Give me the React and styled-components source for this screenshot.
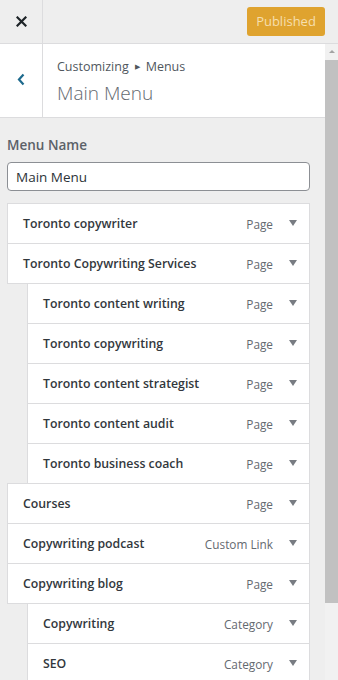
import React from 'react';
import styled, {createGlobalStyle} from 'styled-components';

const Global = createGlobalStyle`
  html, body {
    margin: 0;
    padding: 0;
    background: #eeeeee;
  }
  * { box-sizing: border-box; }
`

const Frame = styled.div`
  width: 338px;
  height: 680px;
  overflow: hidden;
  background: #eeeeee;
  font-family: "Open Sans", "Noto Sans", sans-serif;
  display: flex;
  flex-direction: column;
`

const TopBar = styled.div`
  height: 44px;
  flex-shrink: 0;
  display: flex;
  align-items: center;
  justify-content: space-between;
  background: #eeeeee;
  border-bottom: 1px solid #dcdcde;
`

const CloseBtn = styled.div`
  width: 43px;
  height: 100%;
  border-right: 1px solid #dcdcde;
  display: flex;
  align-items: center;
  justify-content: center;
`

const PublishBtn = styled.div`
  width: 78px;
  height: 29px;
  margin-right: 13px;
  margin-top: -1px;
  border-radius: 3px;
  background: #dfa32f;
  color: #f6dfae;
  font-size: 13px;
  display: flex;
  align-items: center;
  justify-content: center;
`

const Body = styled.div`
  flex: 1;
  display: flex;
  min-height: 0;
`

const Content = styled.div`
  width: 325px;
  display: flex;
  flex-direction: column;
  overflow: hidden;
`

const SectionHead = styled.div`
  height: 74px;
  flex-shrink: 0;
  background: #fff;
  border-bottom: 1px solid #dcdcde;
  display: flex;
`

const BackBtn = styled.div`
  width: 43px;
  border-right: 1px solid #dcdcde;
  display: flex;
  align-items: center;
  justify-content: center;
  padding-bottom: 2px;
`

const HeadText = styled.div`
  padding: 14px 0 0 14px;
`

const Crumb = styled.div`
  font-size: 12.5px;
  color: #50575e;
  line-height: 18px;
  display: flex;
  align-items: center;
  gap: 6px;
`

const CrumbArrow = styled.span`
  font-size: 7px;
  color: #50575e;
`

const Title = styled.div`
  font-size: 19px;
  font-weight: 300;
  color: #646970;
  line-height: 26px;
  margin-top: 4px;
`

const Panel = styled.div`
  flex-shrink: 0;
  padding: 17px 15px 0 7px;
`

const Label = styled.div`
  font-size: 13.5px;
  font-weight: 600;
  color: #5b6168;
  line-height: 20px;
`

const NameInput = styled.div`
  margin-top: 7px;
  height: 29px;
  border: 1px solid #8c8f94;
  border-radius: 4px;
  background: #fff;
  font-size: 13.5px;
  color: #2c3338;
  padding-left: 8px;
  display: flex;
  align-items: center;
`

const List = styled.div`
  margin-top: 12px;
`

const Item = styled.div`
  height: 41px;
  margin-top: -1px;
  margin-left: ${p => p.$depth * 20}px;
  background: #fff;
  border: 1px solid #dcdcde;
  display: flex;
  align-items: center;
  padding: 0 12px 0 15px;
  &:first-child { margin-top: 0; }
`

const ItemTitle = styled.div`
  flex: 1;
  font-size: 12.3px;
  font-weight: 600;
  color: #32373c;
`

const ItemType = styled.div`
  font-size: 11.8px;
  color: #646970;
  margin-right: 16px;
`

const Caret = styled.div`
  width: 0;
  height: 0;
  border-left: 4.5px solid transparent;
  border-right: 4.5px solid transparent;
  border-top: 6px solid #787c82;
  margin-top: -2px;
`

const Scrollbar = styled.div`
  width: 13px;
  flex-shrink: 0;
  background: #f1f1f1;
`

const ScrollUp = styled.div`
  width: 0;
  height: 0;
  margin: 6px auto 0;
  border-left: 3px solid transparent;
  border-right: 3px solid transparent;
  border-bottom: 3px solid #a3a3a3;
`

const Thumb = styled.div`
  margin-top: 7px;
  height: 543px;
  background: #c1c1c1;
`

const items = [
  {title: 'Toronto copywriter', type: 'Page', depth: 0},
  {title: 'Toronto Copywriting Services', type: 'Page', depth: 0},
  {title: 'Toronto content writing', type: 'Page', depth: 1},
  {title: 'Toronto copywriting', type: 'Page', depth: 1},
  {title: 'Toronto content strategist', type: 'Page', depth: 1},
  {title: 'Toronto content audit', type: 'Page', depth: 1},
  {title: 'Toronto business coach', type: 'Page', depth: 1},
  {title: 'Courses', type: 'Page', depth: 0},
  {title: 'Copywriting podcast', type: 'Custom Link', depth: 0},
  {title: 'Copywriting blog', type: 'Page', depth: 0},
  {title: 'Copywriting', type: 'Category', depth: 1},
  {title: 'SEO', type: 'Category', depth: 1},
]

export default function App() {
  return (
    <Frame>
      <Global />
      <TopBar>
        <CloseBtn>
          <svg width="11" height="11" viewBox="0 0 11 11">
            <path d="M1.5 1.5 L9.5 9.5 M9.5 1.5 L1.5 9.5" stroke="#1d2327" strokeWidth="2.2" strokeLinecap="square" />
          </svg>
        </CloseBtn>
        <PublishBtn>Published</PublishBtn>
      </TopBar>
      <Body>
        <Content>
          <SectionHead>
            <BackBtn>
              <svg width="9" height="13" viewBox="0 0 9 13">
                <path d="M6.5 1.5 L2 6.5 L6.5 11.5" stroke="#1e6a8d" strokeWidth="2.2" fill="none" />
              </svg>
            </BackBtn>
            <HeadText>
              <Crumb>Customizing <CrumbArrow>▶</CrumbArrow> Menus</Crumb>
              <Title>Main Menu</Title>
            </HeadText>
          </SectionHead>
          <Panel>
            <Label>Menu Name</Label>
            <NameInput>Main Menu</NameInput>
            <List>
              {items.map(it => (
                <Item key={it.title} $depth={it.depth}>
                  <ItemTitle>{it.title}</ItemTitle>
                  <ItemType>{it.type}</ItemType>
                  <Caret />
                </Item>
              ))}
            </List>
          </Panel>
        </Content>
        <Scrollbar>
          <ScrollUp />
          <Thumb />
        </Scrollbar>
      </Body>
    </Frame>
  );
}
